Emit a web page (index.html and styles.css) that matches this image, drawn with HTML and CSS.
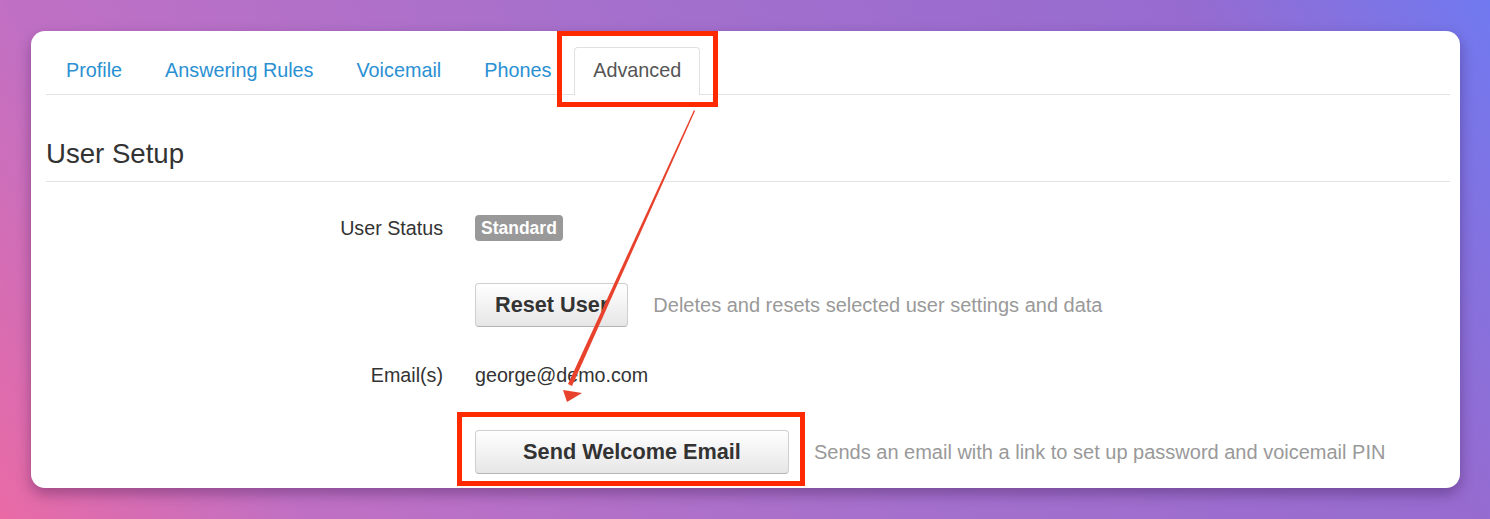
FILE: index.html
```html
<!DOCTYPE html>
<html lang="en">
<head>
  <meta charset="UTF-8" />
  <title>User Setup</title>
  <link rel="stylesheet" href="styles.css">
</head>
<body>

  <div class="card">
    <ul class="tabs">
      <li><a href="#">Profile</a></li>
      <li><a href="#">Answering Rules</a></li>
      <li><a href="#">Voicemail</a></li>
      <li><a href="#">Phones</a></li>
      <li class="active highlight"><a href="#">Advanced</a></li>
    </ul>

    <h2 class="section-title">User Setup</h2>

    <div class="form-grid">
      <div class="row">
        <label>User Status</label>
        <div class="value"><span class="badge">Standard</span></div>
      </div>

      <div class="row">
        <label></label>
        <div class="value">
          <button class="btn btn-reset">Reset User</button>
          <span class="help">Deletes and resets selected user settings and data</span>
        </div>
      </div>

      <div class="row row-text">
        <label>Email(s)</label>
        <div class="value">george@demo.com</div>
      </div>

      <div class="row">
        <label></label>
        <div class="value">
          <span class="highlight highlight-btn"><button class="btn btn-welcome">Send Welcome Email</button></span>
          <span class="help">Sends an email with a link to set up password and voicemail PIN</span>
        </div>
      </div>
    </div>

    <!-- annotation arrow -->
    <svg class="arrow" width="1429" height="457" viewBox="0 0 1429 457">
      <polygon points="663,79 664,80 541,355 537,353" fill="#e8412c" />
      <polygon points="532,359 551,362 536,371" fill="#e8412c" />
    </svg>
  </div>

</body>
</html>
```

FILE: styles.css
```css
body {
  margin: 0;
  height: 519px;
  padding: 31px 30px 0 31px;
  box-sizing: border-box;
  font-family: "Liberation Sans", Arial, sans-serif;
  background: linear-gradient(60deg, #e96aa5 0%, #c070c4 17%, #a570cc 50%, #966bd0 83%, #7079f0 100%);
  overflow: hidden;
}

.card {
  position: relative;
  background: #ffffff;
  border-radius: 14px;
  padding: 16px 10px 14px 15px;
  box-shadow: 0 6px 14px rgba(40, 10, 60, 0.35);
}

/* onglets */
.tabs {
  list-style: none;
  margin: 0;
  padding: 0;
  display: flex;
  border-bottom: 1px solid #e2e2e2;
}

.tabs li {
  position: relative;
  margin-right: 3px;
  margin-bottom: -1px;
}

.tabs a {
  display: block;
  height: 46px;
  line-height: 45px;
  padding: 0 19px;
  font-size: 19.8px;
  color: #2a90d2;
  text-decoration: none;
  border: 1px solid transparent;
  border-bottom: none;
  border-radius: 4px 4px 0 0;
}

.tabs li.active a {
  color: #555;
  background: #fff;
  border-color: #e0e0e0;
  height: 47px;
  padding: 0 18px;
}

/* encadrés rouges */
.highlight::after {
  content: "";
  position: absolute;
  top: -16px;
  left: -17px;
  right: -18px;
  bottom: -12px;
  border: 5px solid #ff2a00;
  pointer-events: none;
}

.highlight-btn {
  position: relative;
  display: inline-block;
}

.highlight-btn::after {
  top: -18px;
  left: -18px;
  right: -16px;
  bottom: -12px;
}

.section-title {
  margin: 43px 0 0;
  padding-bottom: 11px;
  font-size: 27.6px;
  font-weight: normal;
  line-height: 32px;
  color: #333;
  border-bottom: 1px solid #e2e2e2;
}

/* formulaire */
.form-grid {
  display: flex;
  flex-direction: column;
  gap: 33px;
  margin-top: 24px;
}

.row {
  display: grid;
  grid-template-columns: 397px 1fr;
  column-gap: 32px;
  align-items: center;
  height: 44px;
}

.row-text {
  height: 30px;
  margin-bottom: 7px;
}

.row label {
  text-align: right;
  font-size: 19.7px;
  color: #333;
}

.value {
  display: flex;
  align-items: center;
  gap: 25px;
  font-size: 19.7px;
  color: #333;
}

.badge {
  display: inline-block;
  background: #999;
  color: #fff;
  font-weight: bold;
  font-size: 17.5px;
  line-height: 26px;
  padding: 0 6px;
  border-radius: 4px;
}

.btn {
  height: 44px;
  font-family: "Liberation Sans", Arial, sans-serif;
  font-size: 21.7px;
  font-weight: bold;
  color: #333;
  background: linear-gradient(#ffffff, #e6e6e6);
  border: 1px solid #cfcfcf;
  border-bottom-color: #b5b5b5;
  border-radius: 4px;
  cursor: pointer;
}

.btn-reset {
  padding: 0 19px;
}

.btn-welcome {
  width: 314px;
  padding: 0;
  display: block;
}

.help {
  font-size: 20px;
  color: #999;
}

.arrow {
  position: absolute;
  left: 0;
  top: 0;
  pointer-events: none;
}
```
